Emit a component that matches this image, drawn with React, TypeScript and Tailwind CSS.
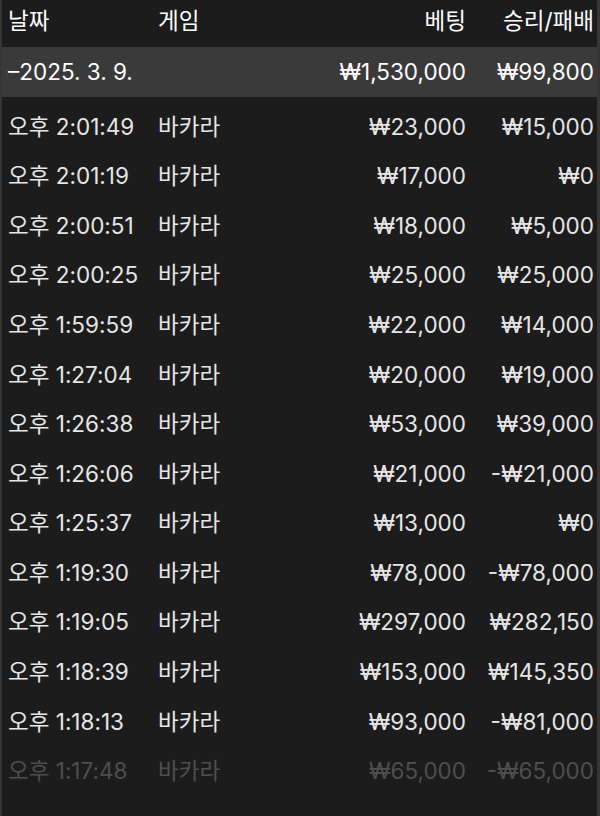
import React from 'react';

const rows = [
  ['오후 2:01:49', '₩23,000', '₩15,000'],
  ['오후 2:01:19', '₩17,000', '₩0'],
  ['오후 2:00:51', '₩18,000', '₩5,000'],
  ['오후 2:00:25', '₩25,000', '₩25,000'],
  ['오후 1:59:59', '₩22,000', '₩14,000'],
  ['오후 1:27:04', '₩20,000', '₩19,000'],
  ['오후 1:26:38', '₩53,000', '₩39,000'],
  ['오후 1:26:06', '₩21,000', '-₩21,000'],
  ['오후 1:25:37', '₩13,000', '₩0'],
  ['오후 1:19:30', '₩78,000', '-₩78,000'],
  ['오후 1:19:05', '₩297,000', '₩282,150'],
  ['오후 1:18:39', '₩153,000', '₩145,350'],
  ['오후 1:18:13', '₩93,000', '-₩81,000'],
  ['오후 1:17:48', '₩65,000', '-₩65,000'],
];

const font = { fontFamily: 'Inter, "Noto Sans CJK KR", sans-serif' };

const App = () => {
  return (
    <div
      className="w-[600px] h-[816px] overflow-hidden bg-[#1c1c1c] border-l-2 border-r-[3px] border-[#363636] text-[22.5px] leading-none"
      style={font}
    >
      {/* header */}
      <div className="grid grid-cols-[150px_1fr_130px_128px] items-center h-[47px] pb-[5px] pl-[6px] pr-[3px] text-white">
        <div>날짜</div>
        <div>게임</div>
        <div className="text-right">베팅</div>
        <div className="text-right">승리/패배</div>
      </div>

      {/* day total */}
      <div className="grid grid-cols-[150px_1fr_130px_128px] items-center h-[50px] pl-[6px] pr-[3px] bg-[#3a3a3a] text-white">
        <div>–2025. 3. 9.</div>
        <div></div>
        <div className="text-right">₩1,530,000</div>
        <div className="text-right">₩99,800</div>
      </div>

      <div className="pt-[5px]">
        {rows.map(([time, bet, win], i) => (
          <div
            key={time}
            className={`grid grid-cols-[150px_1fr_130px_128px] items-center h-[49.6px] pl-[6px] pr-[3px] ${
              i === rows.length - 1 ? 'text-[#4e4e4e]' : 'text-[#e6e6e6]'
            }`}
          >
            <div>{time}</div>
            <div>바카라</div>
            <div className="text-right">{bet}</div>
            <div className="text-right">{win}</div>
          </div>
        ))}
      </div>
    </div>
  );
};

export default App;
